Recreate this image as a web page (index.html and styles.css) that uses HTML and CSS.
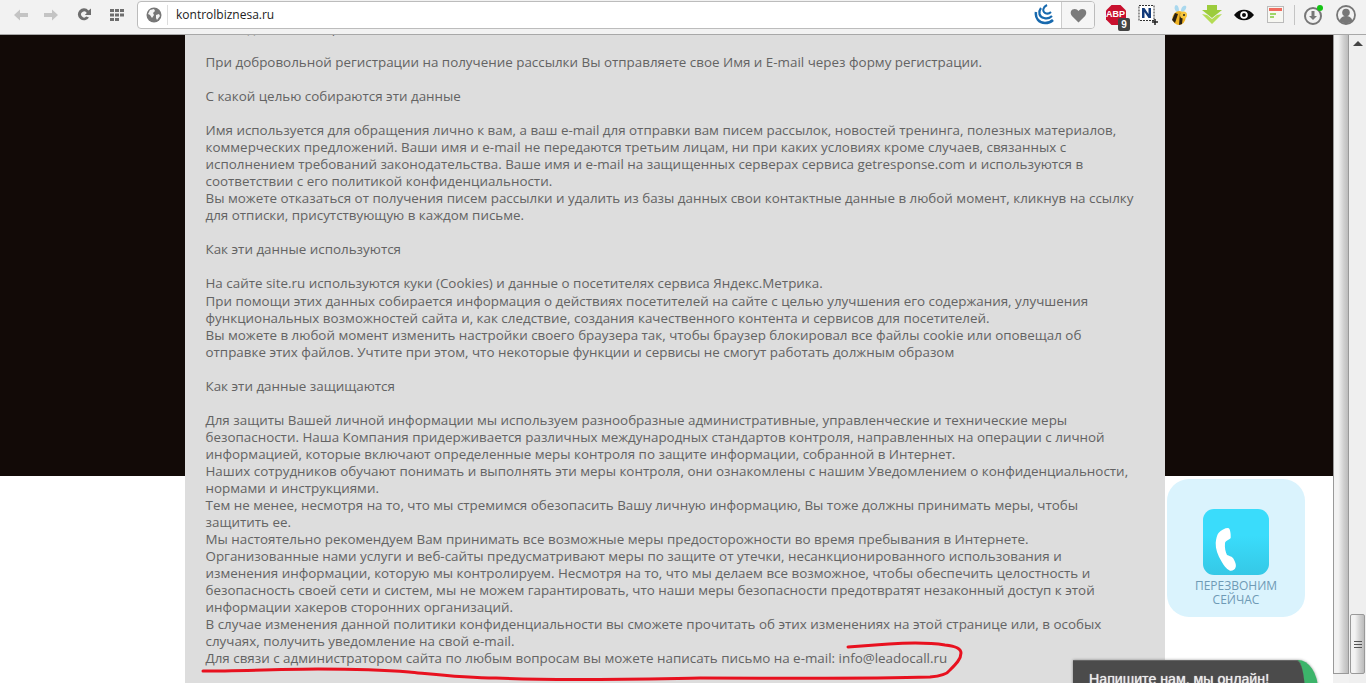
FILE: index.html
```html
<!DOCTYPE html>
<html lang="ru">
<head>
    <meta charset="UTF-8">
    <title>kontrolbiznesa.ru</title>
    <link rel="stylesheet" href="styles.css">
</head>
<body>
    <!-- панель браузера -->
    <div class="toolbar">
        <div class="nav-buttons">
            <svg class="nav-icon nav-back" viewBox="0 0 16 16"><path d="M1 8l6-5.500v3.500h8v4H7v3.500z" fill="#c4c4c4"/></svg>
            <svg class="nav-icon" viewBox="0 0 16 16"><path d="M15 8L9 2.500v3.500H1v4h8v3.500z" fill="#c4c4c4"/></svg>
            <svg class="nav-icon" viewBox="0 0 16 16"><path d="M13 10.500A6 6 0 1 1 12.500 3.500L15 1.500V8H8.800l2-2A3 3 0 1 0 10.300 9.500z" fill="#6e6e6e"/></svg>
            <svg class="nav-icon" viewBox="0 0 16 16" fill="#6e6e6e"><path d="M1 2h4v3H1zM6 2h4v3H6zM11 2h4v3h-4zM1 6.500h4v3H1zM6 6.500h4v3H6zM11 6.500h4v3h-4zM1 11h4v3H1zM6 11h4v3H6z"/></svg>
        </div>
        <div class="omnibox">
            <svg class="globe" viewBox="0 0 16 16"><circle cx="8" cy="8" r="7.500" fill="#777"/><path d="M4 3l4-1 1 2-2 2 1 2-2 3-2-3-2-1zM10 8l3-1 1 2-3 4-1-2z" fill="#f4f4f4"/></svg>
            <span class="url">kontrolbiznesa.ru</span>
            <svg class="omni-jquery" viewBox="0 0 20 22" fill="none" stroke="#1769ae"><path d="M13 1C9 3 8 7 11 9c2 1 4 1 6-1" stroke-width="2"/><path d="M7 4C4 8 5 13 10 14c3 1 6 0 8-2" stroke-width="2.200"/><path d="M2 8c-1 6 3 11 9 11 3 0 6-1 8-3" stroke-width="2.500"/></svg>
            <div class="omni-star">
                <svg viewBox="0 0 18 16"><path d="M9 15.500L2 8.500C0 6.300 0.500 3 2.500 1.700 5 0.300 7.500 1 9 3.300 10.500 1 13 0.300 15.500 1.700 17.500 3 18 6.300 16 8.500z" fill="#7b7b7b"/></svg>
            </div>
        </div>
        <div class="extensions">
            <span class="ext ext-abp">
                <svg viewBox="0 0 22 22"><path d="M6.500 1h9L21 6.500v9L15.500 21h-9L1 15.500v-9z" fill="#c8102e"/></svg>
                <span class="abp-text">ABP</span>
                <span class="abp-count">9</span>
            </span>
            <span class="ext">
                <svg viewBox="0 0 22 22"><rect x="2" y="1.500" width="15" height="15" fill="#fff" stroke="#333" stroke-dasharray="2 1"/><path d="M5 14V4h2.500l4 6V4H14v10h-2.500l-4-6v6z" fill="#123a7a"/><path d="M18 15v6M15 18h6" stroke="#222" stroke-width="1.500"/></svg>
            </span>
            <span class="ext">
                <svg viewBox="0 0 22 22"><path d="M8 8C5 6 5 2 7 1c2 0 3 3 3 6zM12 7c0-3 2-6 5-5 1 2-1 5-4 6z" fill="#a9d8ee"/><ellipse cx="10" cy="14" rx="6.500" ry="7" fill="#f0b323" transform="rotate(20 10 14)"/><path d="M6 9l-3 7 3 3 3-9zM11 9l-1 12 3-1 1-9z" fill="#2b2113"/><circle cx="14.500" cy="11" r="3.500" fill="#f7c53c"/><circle cx="15" cy="11" r="1" fill="#222"/></svg>
            </span>
            <span class="ext">
                <svg viewBox="0 0 22 22"><path d="M6 1h10v5h5l-10 8L1 6h5z" fill="#9ccc3c"/><path d="M1 10l5 1 5 4 5-4 5-1-10 10z" fill="#b4dc54"/></svg>
            </span>
            <span class="ext">
                <svg viewBox="0 0 22 22"><path d="M1 11c5-7 15-7 20 0-5 7-15 7-20 0z" fill="#0a0a0a"/><circle cx="11" cy="11" r="3.800" fill="#fff"/><circle cx="11" cy="11" r="2" fill="#0a0a0a"/></svg>
            </span>
            <span class="ext">
                <svg viewBox="0 0 22 22"><rect x="2.500" y="2.500" width="16" height="16" fill="#f7f7f2" stroke="#bbb"/><rect x="4" y="4" width="13" height="3" fill="#ef6b5f"/><rect x="5" y="9" width="6" height="2" fill="#9fd66a"/><rect x="5" y="12" width="4" height="2" fill="#9fd66a"/></svg>
            </span>
            <span class="ext-separator"></span>
            <span class="ext">
                <svg viewBox="0 0 22 22"><circle cx="10" cy="12" r="8" fill="none" stroke="#777" stroke-width="2"/><path d="M8.500 7h3v5h2.500l-4 4-4-4h2.500z" fill="#777"/><circle cx="17" cy="4" r="3" fill="#14c414"/></svg>
            </span>
            <span class="ext">
                <svg viewBox="0 0 22 22"><circle cx="11" cy="11" r="9" fill="none" stroke="#777" stroke-width="1.800"/><circle cx="11" cy="8.500" r="3.800" fill="#777"/><path d="M4.500 17c1-4 4-5 6.500-5s5.500 1 6.500 5c-3.500 3-9.500 3-13 0z" fill="#777"/></svg>
            </span>
        </div>
    </div>

    <div class="viewport">
        <div class="page">
            <div class="article">
                <p>Какие данные собираются</p>
                <br>
                <p>При добровольной регистрации на получение рассылки Вы отправляете свое Имя и E-mail через форму регистрации.</p>
                <br>
                <p>С какой целью собираются эти данные</p>
                <br>
                <p>Имя используется для обращения лично к вам, а ваш e-mail для отправки вам писем рассылок, новостей тренинга, полезных материалов, коммерческих предложений. Ваши имя и e-mail не передаются третьим лицам, ни при каких условиях кроме случаев, связанных с исполнением требований законодательства. Ваше имя и e-mail на защищенных серверах сервиса getresponse.com и используются в соответствии с его политикой конфиденциальности.</p>
                <p>Вы можете отказаться от получения писем рассылки и удалить из базы данных свои контактные данные в любой момент, кликнув на ссылку для отписки, присутствующую в каждом письме.</p>
                <br>
                <p>Как эти данные используются</p>
                <br>
                <p>На сайте site.ru используются куки (Cookies) и данные о посетителях сервиса Яндекс.Метрика.</p>
                <p>При помощи этих данных собирается информация о действиях посетителей на сайте с целью улучшения его содержания, улучшения функциональных возможностей сайта и, как следствие, создания качественного контента и сервисов для посетителей.</p>
                <p>Вы можете в любой момент изменить настройки своего браузера так, чтобы браузер блокировал все файлы cookie или оповещал об отправке этих файлов. Учтите при этом, что некоторые функции и сервисы не смогут работать должным образом</p>
                <br>
                <p>Как эти данные защищаются</p>
                <br>
                <p>Для защиты Вашей личной информации мы используем разнообразные административные, управленческие и технические меры безопасности. Наша Компания придерживается различных международных стандартов контроля, направленных на операции с личной информацией, которые включают определенные меры контроля по защите информации, собранной в Интернет.</p>
                <p>Наших сотрудников обучают понимать и выполнять эти меры контроля, они ознакомлены с нашим Уведомлением о конфиденциальности, нормами и инструкциями.</p>
                <p>Тем не менее, несмотря на то, что мы стремимся обезопасить Вашу личную информацию, Вы тоже должны принимать меры, чтобы защитить ее.</p>
                <p>Мы настоятельно рекомендуем Вам принимать все возможные меры предосторожности во время пребывания в Интернете.</p>
                <p>Организованные нами услуги и веб-сайты предусматривают меры по защите от утечки, несанкционированного использования и изменения информации, которую мы контролируем. Несмотря на то, что мы делаем все возможное, чтобы обеспечить целостность и безопасность своей сети и систем, мы не можем гарантировать, что наши меры безопасности предотвратят незаконный доступ к этой информации хакеров сторонних организаций.</p>
                <p>В случае изменения данной политики конфиденциальности вы сможете прочитать об этих изменениях на этой странице или, в особых случаях, получить уведомление на свой e-mail.</p>
                <p>Для связи с администратором сайта по любым вопросам вы можете написать письмо на e-mail: info@leadocall.ru</p>
            </div>

            <!-- кнопка обратного звонка -->
            <div class="callback">
                <div class="callback-icon">
                    <svg viewBox="0 0 66 66"><path d="M15.500 24C18 21 22 19 25 19 27 19 28 24 27.700 29 26 31 23 31 22 34 21.500 39 22.500 43 24 46 26 47 28 47 30 49 32 52 33.500 56 32.700 58 32 61 29.500 62 27 61.700 23 60 20.500 56 18.700 52.700 14.500 46 12.500 40 12.700 34 13 30 14 26 15.500 24z" fill="#fff"/></svg>
                </div>
                <div class="callback-text">Перезвоним<br>сейчас</div>
            </div>

            <!-- онлайн чат -->
            <div class="chat-widget">
                <div class="chat-body">
                    <span class="chat-title">Напишите нам, мы онлайн!</span>
                </div>
            </div>

            <!-- красная линия поверх текста -->
            <svg class="scribble" viewBox="0 35 1332 648">
                <path d="M203 671C240 671 285 669 318 669 350 669 385 670 409 672 440 675 465 678 496 678 560 681 640 679 700 678 780 678 860 679 930 677 942 676 948 673 950 670 956 664 961 659 961 653 961 649 955 646 945 645 925 642 905 643 889 644 875 645 860 646 848 647" fill="none" stroke="#e8111f" stroke-width="3" stroke-linecap="round"/>
            </svg>
        </div>

        <!-- полосы прокрутки -->
        <div class="scrollbar scrollbar-inner">
            <div class="scroll-thumb-long"></div>
        </div>
        <div class="scrollbar scrollbar-outer">
            <span class="scroll-arrow"></span>
            <div class="scroll-thumb-short">
                <span class="grip"></span>
                <span class="grip"></span>
                <span class="grip"></span>
            </div>
        </div>
    </div>
</body>
</html>
```

FILE: styles.css
```css
* {
    margin: 0;
    padding: 0;
    box-sizing: border-box;
}

html, body {
    height: 100%;
    overflow: hidden;
}

body {
    display: flex;
    flex-direction: column;
    font-family: "Open Sans", "Liberation Sans", sans-serif;
    background-color: #fff;
}

/* панель браузера */
.toolbar {
    height: 35px;
    flex-shrink: 0;
    display: flex;
    align-items: flex-start;
    background-color: #f2f2f2;
    border-bottom: 1px solid #a8a8a8;
}

.nav-buttons {
    width: 137px;
    height: 30px;
    flex-shrink: 0;
    display: flex;
    align-items: center;
    padding-left: 13px;
    gap: 17px;
}

.nav-icon {
    width: 16px;
    height: 16px;
}

.nav-back {
    margin-right: -3px;
}

.omnibox {
    width: 958px;
    height: 28px;
    flex-shrink: 0;
    margin-top: 1px;
    display: flex;
    align-items: center;
    background-color: #fff;
    border: 1px solid #bcbcbc;
    border-radius: 4px;
    overflow: hidden;
}

.globe {
    width: 16px;
    height: 16px;
    margin-left: 8px;
}

.url {
    flex: 1;
    margin-left: 5px;
    padding-left: 8px;
    border-left: 1px solid #ddd;
    font-size: 12px;
    line-height: 20px;
    color: #222;
}

.omni-jquery {
    width: 20px;
    height: 22px;
    margin-right: 7px;
}

.omni-star {
    width: 33px;
    height: 100%;
    display: flex;
    align-items: center;
    justify-content: center;
    background-color: #f5f5f5;
    border-left: 1px solid #ccc;
}

.omni-star svg {
    width: 17px;
    height: 15px;
}

.extensions {
    flex: 1;
    height: 30px;
    display: flex;
    align-items: center;
    padding-left: 10px;
}

.ext {
    position: relative;
    width: 22px;
    height: 22px;
    margin-right: 10px;
}

.ext svg {
    display: block;
    width: 22px;
    height: 22px;
}

.ext-separator {
    width: 1px;
    height: 20px;
    margin: 0 8px 0 -3px;
    background-color: #c4c4c4;
}

.abp-text {
    position: absolute;
    left: 1px;
    top: 5px;
    font-family: "Liberation Sans", sans-serif;
    font-size: 9px;
    line-height: 11px;
    font-weight: 700;
    color: #fff;
}

.abp-count {
    position: absolute;
    right: -3px;
    bottom: -5px;
    width: 12px;
    height: 13px;
    border-radius: 2px;
    background-color: #444;
    font-family: "Liberation Sans", sans-serif;
    font-size: 10px;
    line-height: 13px;
    font-weight: 700;
    text-align: center;
    color: #fff;
}

/* страница */
.viewport {
    flex: 1;
    min-height: 0;
    display: flex;
}

.page {
    position: relative;
    width: 1333px;
    overflow: hidden;
    background: linear-gradient(#120a07 441px, #fff 441px);
}

.article {
    width: 980px;
    margin: -15px 0 0 185px;
    padding: 0 31px 60px 20.500px;
    background-color: #ddd;
    font-size: 13.4px;
    line-height: 17.03px;
    color: #636363;
}

.article br {
    display: block;
    content: "";
    height: 17.03px;
}

.callback {
    position: absolute;
    left: 1167px;
    top: 444px;
    width: 138px;
    height: 138px;
    padding-top: 30px;
    border-radius: 22px;
    background-color: #daf3fd;
    text-align: center;
}

.callback-icon {
    width: 66px;
    height: 66px;
    margin: 0 auto 4px;
    border-radius: 11px;
    background: linear-gradient(#3adcfb 40%, #35c8e6);
}

.callback-icon svg {
    display: block;
    width: 66px;
    height: 66px;
}

.callback-text {
    font-size: 12px;
    line-height: 14px;
    text-transform: uppercase;
    color: #6f9ab5;
}

.chat-widget {
    position: absolute;
    left: 1073px;
    top: 625px;
    width: 245px;
    height: 40px;
    border-radius: 0 20px 0 0 / 0 30px 0 0;
    background-color: #3cb46a;
    box-shadow: 0 0 3px rgba(0, 0, 0, 0.4);
}

.chat-body {
    width: 232px;
    height: 100%;
    padding: 6px 0 0 16px;
    border-top: 1px solid #666;
    border-radius: 0 8px 0 0 / 0 36px 0 0;
    background-color: #4b4b4b;
}

.chat-title {
    font-family: "Liberation Sans", sans-serif;
    font-size: 14.2px;
    line-height: 17px;
    color: #ececec;
    text-shadow: 0 0 1px #ececec;
}

.scribble {
    position: absolute;
    left: 0;
    top: 0;
    width: 1332px;
    height: 648px;
}

/* полосы прокрутки */
.scrollbar {
    flex: 1;
    position: relative;
    background-color: #efefef;
}

.scrollbar-inner {
    flex: 0 0 16px;
    background-color: #f1f1f1;
}

.scroll-thumb-long {
    height: 639px;
    border: 1px solid #999;
    border-top: 0;
    background: linear-gradient(90deg, #f2f2f2 30%, #cfcfcf 70%, #bcbcbc);
}

.scroll-arrow {
    position: absolute;
    left: 4px;
    top: 6px;
    border-left: 5px solid transparent;
    border-right: 5px solid transparent;
    border-bottom: 5px solid #444;
}

.scroll-thumb-short {
    position: absolute;
    left: 1px;
    right: 1px;
    top: 579px;
    height: 60px;
    display: flex;
    flex-direction: column;
    align-items: center;
    justify-content: center;
    gap: 2px;
    border: 1px solid #999;
    border-radius: 2px;
    background: linear-gradient(90deg, #f2f2f2 30%, #cfcfcf 70%, #bcbcbc);
}

.grip {
    width: 8px;
    height: 1px;
    background-color: #555;
}
```
